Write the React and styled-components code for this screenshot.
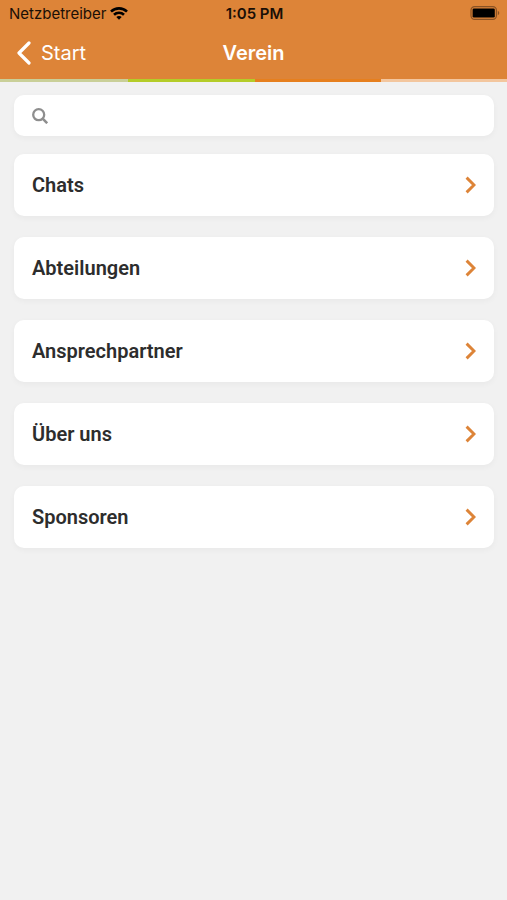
import styled, { createGlobalStyle } from "styled-components";

const GlobalStyle = createGlobalStyle`
  * {
    box-sizing: border-box;
  }
  body {
    margin: 0;
    background: #f1f1f1;
    font-family: Roboto, "Liberation Sans", sans-serif;
  }
`;

const Page = styled.div`
  min-height: 100vh;
  background: #f1f1f1;
`;

const Header = styled.header`
  background: #dd8438;
`;

const StatusBar = styled.div`
  display: grid;
  grid-template-columns: 1fr auto 1fr;
  align-items: center;
  height: 26px;
  padding: 0 7px 0 9px;
  color: #1a0f06;
  font-family: Inter, sans-serif;
  font-size: 15px;
`;

const Carrier = styled.div`
  display: flex;
  align-items: center;
  gap: 4px;
`;

const Time = styled.div`
  font-weight: 600;
`;

const Battery = styled.svg`
  justify-self: end;
`;

const NavBar = styled.nav`
  display: grid;
  grid-template-columns: 1fr auto 1fr;
  align-items: center;
  height: 53px;
  padding: 0 16px;
  color: #ffffff;
  font-family: Inter, sans-serif;
`;

const BackLink = styled.a`
  display: flex;
  align-items: center;
  gap: 10px;
  color: inherit;
  font-size: 20px;
  text-decoration: none;
`;

const Title = styled.h1`
  margin: 0;
  font-size: 20px;
  font-weight: 600;
`;

const Stripes = styled.div`
  display: flex;
  height: 3px;
  padding-left: 2px;
  background: #c9cf98;
`;

const Stripe = styled.div`
  flex: 1;
  background: ${(props) => props.$color};
`;

const Content = styled.main`
  padding: 13px 13px 24px 14px;
`;

const SearchField = styled.label`
  display: flex;
  align-items: center;
  gap: 10px;
  height: 41px;
  margin-bottom: 18px;
  padding: 0 18px;
  background: #ffffff;
  border-radius: 10px;
  box-shadow: 0 2px 6px rgba(0, 0, 0, 0.04);

  input {
    flex: 1;
    min-width: 0;
    padding: 0;
    border: none;
    outline: none;
    background: transparent;
    color: #2d2d2d;
    font-family: inherit;
    font-size: 16px;
  }
`;

const List = styled.ul`
  display: flex;
  flex-direction: column;
  gap: 21px;
  margin: 0;
  padding: 0;
  list-style: none;
`;

const Card = styled.a`
  display: flex;
  align-items: center;
  justify-content: space-between;
  height: 62px;
  padding: 0 18px;
  background: #ffffff;
  border-radius: 10px;
  box-shadow: 0 2px 6px rgba(0, 0, 0, 0.04);
  color: #2d2d2d;
  font-size: 20px;
  line-height: 22px;
  font-weight: 600;
  text-decoration: none;
`;

const stripes = ["#c9cf98", "#b4cc28", "#e67f1e", "#f3c69e"];

const items = ["Chats", "Abteilungen", "Ansprechpartner", "Über uns", "Sponsoren"];

function WifiIcon() {
  return (
    <svg width="18" height="13" viewBox="0 0 18 13" fill="none" stroke="#000000" strokeWidth="2.6">
      <path d="M1 4.6C5.4 0.3 12.6 0.3 17 4.6" />
      <path d="M4 7.8C6.8 5.1 11.2 5.1 14 7.8" />
      <path d="M6.3 10.1C7.8 8.7 10.2 8.7 11.7 10.1L9 12.8Z" fill="#000000" stroke="none" />
    </svg>
  );
}

function BatteryIcon() {
  return (
    <Battery width="30" height="14" viewBox="0 0 30 14">
      <rect x="1" y="0.6" width="25.4" height="12.8" rx="3.6" fill="none" stroke="#8a5224" strokeWidth="1.2" />
      <rect x="2.6" y="2.4" width="22.2" height="9.2" rx="1.4" fill="#000000" />
      <path d="M27.8 4.8C29.8 5.6 29.8 8.4 27.8 9.2Z" fill="#8a5224" />
    </Battery>
  );
}

function BackIcon() {
  return (
    <svg width="15" height="24" viewBox="0 0 15 24" fill="none">
      <path d="M13 2L3 12L13 22" stroke="#ffffff" strokeWidth="3.2" strokeLinecap="round" strokeLinejoin="round" />
    </svg>
  );
}

function SearchIcon() {
  return (
    <svg width="16" height="16" viewBox="0 0 16 16" fill="none" stroke="#8e8e8e">
      <circle cx="6.7" cy="6.7" r="5.5" strokeWidth="2.3" />
      <path d="M10.7 10.7L15.2 15.2" strokeWidth="2.6" />
    </svg>
  );
}

function ChevronIcon() {
  return (
    <svg width="11" height="18" viewBox="0 0 11 18" fill="none">
      <path d="M1.6 1.6L9 9L1.6 16.4" stroke="#dd8438" strokeWidth="2.9" />
    </svg>
  );
}

export default function App() {
  return (
    <Page>
      <GlobalStyle />
      <Header>
        <StatusBar>
          <Carrier>
            Netzbetreiber
            <WifiIcon />
          </Carrier>
          <Time>1:05 PM</Time>
          <BatteryIcon />
        </StatusBar>
        <NavBar>
          <BackLink href="#start">
            <BackIcon />
            Start
          </BackLink>
          <Title>Verein</Title>
        </NavBar>
        <Stripes>
          {stripes.map((color) => (
            <Stripe key={color} $color={color} />
          ))}
        </Stripes>
      </Header>
      <Content>
        <SearchField>
          <SearchIcon />
          <input type="search" aria-label="Suche" />
        </SearchField>
        <List>
          {items.map((item) => (
            <li key={item}>
              <Card href={`#${item}`}>
                {item}
                <ChevronIcon />
              </Card>
            </li>
          ))}
        </List>
      </Content>
    </Page>
  );
}
